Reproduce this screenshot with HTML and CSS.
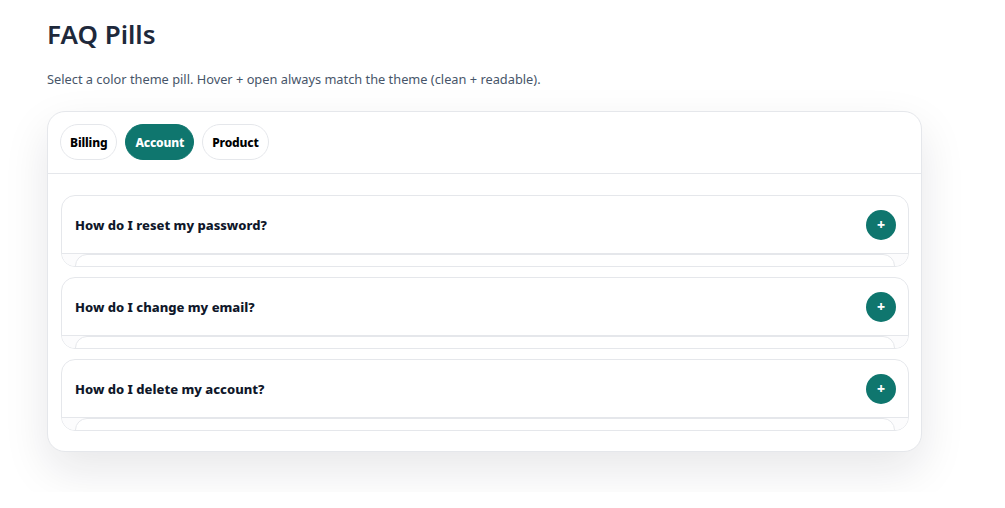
FILE: index.html
```html
<!DOCTYPE html>
<html lang="en">
<head>
<meta charset="utf-8">
<title>FAQ Pills</title>
<link rel="stylesheet" href="styles.css">
</head>
<body>
<main class="page">
  <h1 class="title">FAQ Pills</h1>
  <p class="subtitle">Select a color theme pill. Hover + open always match the theme (clean + readable).</p>
  <section class="card">
    <div class="pills">
      <button class="pill">Billing</button>
      <button class="pill active">Account</button>
      <button class="pill">Product</button>
    </div>
    <div class="list">
      <div class="item">
        <div class="q"><span class="q-text">How do I reset my password?</span><span class="plus">+</span></div>
        <div class="a"><div class="a-inner"></div></div>
      </div>
      <div class="item">
        <div class="q"><span class="q-text">How do I change my email?</span><span class="plus">+</span></div>
        <div class="a"><div class="a-inner"></div></div>
      </div>
      <div class="item">
        <div class="q"><span class="q-text">How do I delete my account?</span><span class="plus">+</span></div>
        <div class="a"><div class="a-inner"></div></div>
      </div>
    </div>
  </section>
</main>
</body>
</html>
```

FILE: styles.css
```css
* { box-sizing: border-box; }
html, body { margin: 0; background: #ffffff; }
body {
  font-family: "Noto Sans", "Open Sans", "Liberation Sans", sans-serif;
  color: #1f2937;
}
.page {
  padding: 16px 47px 40px 47px;
  width: 969px;
}
.title {
  margin: 0;
  font-size: 26px;
  font-weight: 600;
  line-height: 36px;
  color: #1e293b;
}
.subtitle {
  margin: 18px 0 0 0;
  font-size: 12.8px;
  line-height: 18px;
  color: #475569;
}
.card {
  margin-top: 23px;
  border: 1px solid #e5e7eb;
  border-radius: 18px;
  background: #fff;
  box-shadow: 0 18px 45px rgba(15, 23, 42, 0.10);
  overflow: hidden;
}
.pills {
  display: flex;
  gap: 8px;
  padding: 12px 12px 13px 12px;
  border-bottom: 1px solid #e5e7eb;
}
.pill {
  height: 36px;
  padding: 0 9px;
  border: 1px solid #e5e7eb;
  border-radius: 999px;
  background: #fff;
  font-family: inherit;
  font-size: 12px;
  font-weight: 800;
  letter-spacing: -0.15px;
  color: #000;
}
.pill.active {
  background: #0f766e;
  border-color: #0f766e;
  color: #fff;
}
.list {
  display: flex;
  flex-direction: column;
  gap: 10px;
  padding: 21px 12px 20px 13px;
}
.item {
  border: 1px solid #e5e7eb;
  border-radius: 14px;
  overflow: hidden;
  background: #fff;
}
.q {
  display: flex;
  align-items: center;
  justify-content: space-between;
  height: 58px;
  padding: 0 12px 0 13px;
  border-bottom: 1px solid #e5e7eb;
}
.q-text {
  font-size: 13px;
  font-weight: 800;
  color: #0f172a;
}
.plus {
  display: flex;
  align-items: center;
  justify-content: center;
  width: 30px;
  height: 30px;
  border-radius: 50%;
  background: #0f766e;
  color: #fff;
  font-size: 14px;
  font-weight: 800;
  line-height: 1;
}
.a {
  height: 12px;
  padding: 0 13px;
  background: #fcfcfd;
}
.a-inner {
  height: 30px;
  border: 1px solid #e5e7eb;
  border-radius: 12px;
  background: #fff;
}
```
